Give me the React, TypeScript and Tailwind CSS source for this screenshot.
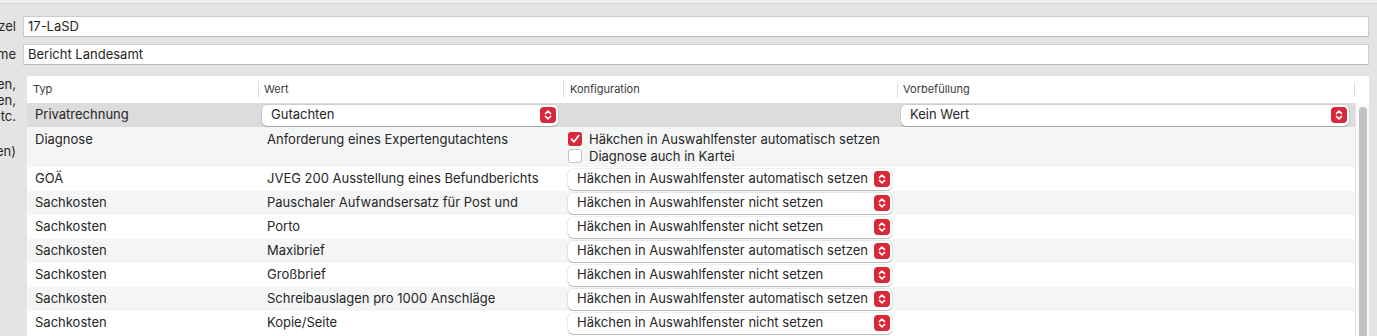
import * as React from "react"

const Stepper = () => (
  <span className="flex h-[16px] w-[16px] shrink-0 items-center justify-center rounded-[4px] bg-[#d8283b]">
    <svg width="16" height="16" viewBox="0 0 16 16" fill="none">
      <path d="M5.4 6.6 L8 4.1 L10.6 6.6" stroke="white" strokeWidth="1.5" strokeLinecap="round" strokeLinejoin="round" />
      <path d="M5.4 9.4 L8 11.9 L10.6 9.4" stroke="white" strokeWidth="1.5" strokeLinecap="round" strokeLinejoin="round" />
    </svg>
  </span>
)

const Popup = ({ label, className }: { label: string; className: string }) => (
  <div
    className={`flex h-[21px] items-center justify-between rounded-[5px] bg-white pl-[9px] pr-[2px] shadow-[0_0_0_0.5px_rgba(0,0,0,0.12),0_1px_1px_rgba(0,0,0,0.22)] ${className}`}
  >
    <span className="truncate">{label}</span>
    <Stepper />
  </div>
)

const Checkbox = ({ checked }: { checked: boolean }) =>
  checked ? (
    <span className="flex h-[14px] w-[14px] shrink-0 items-center justify-center rounded-[3px] bg-[#d8283b]">
      <svg width="14" height="14" viewBox="0 0 14 14" fill="none">
        <path d="M3.5 7.2 L6 9.8 L10.6 3.8" stroke="white" strokeWidth="1.8" strokeLinecap="round" strokeLinejoin="round" />
      </svg>
    </span>
  ) : (
    <span className="h-[14px] w-[14px] shrink-0 rounded-[3px] border border-[#c4c4c4] bg-white" />
  )

const rows = [
  { typ: "GOÄ", wert: "JVEG 200 Ausstellung eines Befundberichts", konf: "Häkchen in Auswahlfenster automatisch setzen" },
  { typ: "Sachkosten", wert: "Pauschaler Aufwandsersatz für Post und", konf: "Häkchen in Auswahlfenster nicht setzen" },
  { typ: "Sachkosten", wert: "Porto", konf: "Häkchen in Auswahlfenster nicht setzen" },
  { typ: "Sachkosten", wert: "Maxibrief", konf: "Häkchen in Auswahlfenster automatisch setzen" },
  { typ: "Sachkosten", wert: "Großbrief", konf: "Häkchen in Auswahlfenster nicht setzen" },
  { typ: "Sachkosten", wert: "Schreibauslagen pro 1000 Anschläge", konf: "Häkchen in Auswahlfenster automatisch setzen" },
  { typ: "Sachkosten", wert: "Kopie/Seite", konf: "Häkchen in Auswahlfenster nicht setzen" },
]

const Label = ({ text }: { text: string }) => (
  <div className="flex w-[16px] shrink-0 justify-end overflow-hidden whitespace-nowrap">
    <span>{text}</span>
  </div>
)

export default function App() {
  return (
    <div className="h-[336px] w-[1377px] overflow-hidden bg-[#e4e4e4] font-['Inter',sans-serif] text-[13px] text-[#262626]">
      <div className="h-[4px] border-b border-[#d7d7d7] bg-[#ececec]" />

      <div className="flex flex-col pt-[12px]">
        {/* Kürzel */}
        <div className="flex h-[21px] items-center">
          <Label text="Kürzel" />
          <div className="ml-[7px] mr-[8px] flex h-[21px] flex-1 items-center border border-[#cdcdcd] border-b-[#b9b9b9] bg-white pl-[4px]">
            17-LaSD
          </div>
        </div>

        {/* Name */}
        <div className="mt-[7px] flex h-[21px] items-center">
          <Label text="Name" />
          <div className="ml-[7px] mr-[8px] flex h-[21px] flex-1 items-center border border-[#cdcdcd] border-b-[#b9b9b9] bg-white pl-[4px]">
            Bericht Landesamt
          </div>
        </div>

        {/* Table area */}
        <div className="mt-[11px] flex">
          <div className="flex w-[16px] shrink-0 flex-col leading-[16px]">
            <Label text="Positionen," />
            <Label text="Diagnosen," />
            <Label text="Sachkosten etc." />
            <div className="h-[19px]" />
            <Label text="(Vorlagen)" />
          </div>

          <div className="ml-[11px] mr-[8px] flex h-[260px] flex-1 bg-white">
            <div className="flex w-[1328px] flex-col">
              {/* Header */}
              <div className="flex h-[27px] items-center text-[11px] text-[#3a3a3a]">
                <div className="w-[231px] pl-[6px]">Typ</div>
                <div className="flex w-[305px] items-center border-l border-[#dedede] pl-[5px]">Wert</div>
                <div className="flex w-[334px] items-center border-l border-[#dedede] pl-[6px]">Konfiguration</div>
                <div className="flex w-[457px] items-center border-l border-[#dedede] pl-[5px]">Vorbefüllung</div>
                <div className="h-[15px] border-l border-[#dedede]" />
              </div>

              {/* Privatrechnung */}
              <div className="flex h-[24px] items-center bg-[#dcdcdc]">
                <div className="w-[231px] pl-[8px]">Privatrechnung</div>
                <div className="w-[305px] pl-[4px] pr-[5px]">
                  <Popup label="Gutachten" className="w-full" />
                </div>
                <div className="w-[334px]" />
                <div className="w-[458px] pl-[4px] pr-[6px]">
                  <Popup label="Kein Wert" className="w-full" />
                </div>
              </div>

              {/* Diagnose */}
              <div className="flex h-[40px] bg-[#f4f5f5] pt-[3px]">
                <div className="w-[231px] pl-[8px]">Diagnose</div>
                <div className="w-[305px] pl-[9px]">Anforderung eines Expertengutachtens</div>
                <div className="flex w-[334px] flex-col gap-[3px] pl-[5px] pt-[2px] leading-[14px]">
                  <div className="flex items-center gap-[7px]">
                    <Checkbox checked />
                    <span>Häkchen in Auswahlfenster automatisch setzen</span>
                  </div>
                  <div className="flex items-center gap-[7px]">
                    <Checkbox checked={false} />
                    <span>Diagnose auch in Kartei</span>
                  </div>
                </div>
              </div>

              {rows.map((r, i) => (
                <div
                  key={i}
                  className={`flex h-[24px] shrink-0 items-center ${i % 2 === 0 ? "bg-white" : "bg-[#f4f5f5]"}`}
                >
                  <div className="w-[231px] pl-[8px]">{r.typ}</div>
                  <div className="w-[305px] truncate pl-[9px]">{r.wert}</div>
                  <div className="w-[334px] pl-[5px] pr-[5px]">
                    <Popup label={r.konf} className="w-full" />
                  </div>
                </div>
              ))}
            </div>

            {/* Scrollbar */}
            <div className="flex w-[14px] flex-col">
              <div className="h-[27px]" />
              <div className="flex flex-1 justify-center border-l border-[#e6e6e6] bg-[#fafafa] pt-[4px]">
                <div className="w-[8px] rounded-t-full bg-[#c2c2c2]" />
              </div>
            </div>
          </div>
        </div>
      </div>
    </div>
  )
}
